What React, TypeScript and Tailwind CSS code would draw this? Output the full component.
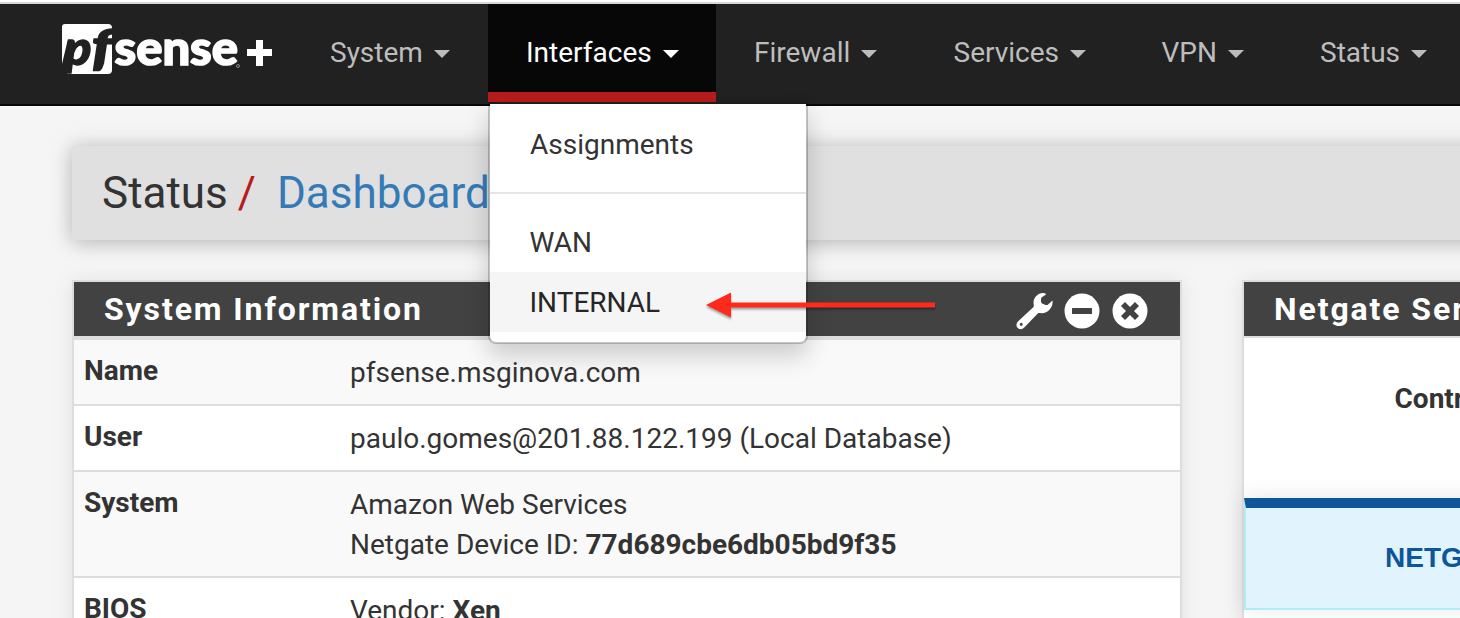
import type { ReactNode } from "react";

function Caret() {
  return <span className="mt-px ml-[11px] h-0 w-0 border-x-8 border-t-8 border-x-transparent border-t-current" />;
}

function NavItem({ label, width, active = false }: { label: string; width: string; active?: boolean }) {
  return (
    <li
      className={`flex h-[98px] shrink-0 items-center border-b-[10px] pl-[38px] ${width} ${
        active ? "border-[#b71c1c] bg-[#070707] text-white" : "border-transparent text-[#bdbdbd]"
      }`}
    >
      <span className="mt-[10px] flex items-center">
        {label}
        <Caret />
      </span>
    </li>
  );
}

function Logo() {
  return (
    <svg width="212" height="52" viewBox="0 0 212 52" className="block shrink-0 overflow-visible" aria-label="pfSense plus">
      <path d="M3 0H46Q50 0 50 4V46Q50 50 46 50H5L12 17H5.500L0 40V3Q0 0 3 0Z" fill="#fff" />
      <text x="2.500" y="41" fill="#212121" stroke="#212121" strokeWidth="1.400" fontFamily="Lato" fontWeight="900" fontStyle="italic" fontSize="48" textLength="27" lengthAdjust="spacingAndGlyphs">p</text>
      <text x="29.500" y="41" fill="#212121" stroke="#212121" strokeWidth="1.400" fontFamily="Lato" fontWeight="900" fontStyle="italic" fontSize="50" textLength="21" lengthAdjust="spacingAndGlyphs">f</text>
      <text x="52.500" y="41" fill="#fff" stroke="#fff" strokeWidth="1.600" fontFamily="Lato" fontWeight="900" fontSize="47.500" textLength="123.500" lengthAdjust="spacingAndGlyphs">sense</text>
      <circle cx="176" cy="42" r="1.500" fill="none" stroke="#888" />
      <path d="M194 16H201V42H194ZM185 25H210V32H185Z" fill="#fff" />
    </svg>
  );
}

function Row({ label, tone, height, children }: { label: string; tone: string; height: string; children: ReactNode }) {
  return (
    <div className={`flex shrink-0 border-b-2 border-[#ddd] ${tone} ${height}`}>
      <div className="w-[276px] shrink-0 pt-[11px] pl-[10px] font-bold">{label}</div>
      <div className="pt-[13px]">{children}</div>
    </div>
  );
}

function PanelIcons() {
  return (
    <div className="flex items-center pt-[3px] text-white">
      <svg width="38" height="38" viewBox="0 0 38 38" fill="currentColor">
        <path
          fillRule="evenodd"
          d="M28.500 1.200C23 0 17.500 5 17.500 10.500C17.500 12.500 18.200 14 17.500 15L2.200 29.200C-0.500 32 .3 35.300 2.300 36.500C4.500 38 6.600 37.300 8.500 35.300L22 21.300C22.700 20.600 24 21 25.500 21.200C32 21.500 37.500 15 36.500 8.500L31.500 13C30.500 13.500 26.500 12 25.500 11C24.500 9.500 25 6.500 25.500 5.500L30 2.500C30 1.800 29.500 1.400 28.500 1.200ZM5.200 30.800A1.500 1.500 0 1 1 5.200 33.800A1.500 1.500 0 1 1 5.200 30.800Z"
        />
      </svg>
      <svg width="36" height="36" viewBox="0 0 36 36" className="ml-[10px]">
        <circle cx="18" cy="18" r="17.500" fill="#fff" />
        <rect x="8" y="15" width="20" height="6" rx="0.500" fill="#424242" />
      </svg>
      <svg width="36" height="36" viewBox="0 0 36 36" className="ml-3">
        <circle cx="18" cy="18" r="17.500" fill="#fff" />
        <path d="M13 9L18 14L23 9L27 13L22 18L27 23L23 27L18 22L13 27L9 23L14 18L9 13Z" fill="#424242" />
      </svg>
    </div>
  );
}

function InterfacesMenu() {
  return (
    <div className="absolute top-[102px] left-[488px] z-10 h-[242px] w-[320px] rounded-b-[8px] border-2 border-t-0 border-black/20 bg-white bg-clip-padding text-[#333] shadow-[0_12px_24px_rgba(0,0,0,0.18)]">
      <div className="h-0.5 bg-[#1c1c1c]" />
      <div className="pt-[21px] pl-10">Assignments</div>
      <div className="mt-[27px] h-0.5 bg-[#e5e5e5]" />
      <div className="mt-[18px] h-[60px] pt-[11px] pl-[39.500px]">WAN</div>
      <div className="h-[60px] bg-[#f5f5f5] pt-[11px] pl-[39.500px] text-[#262626]">INTERNAL</div>
    </div>
  );
}

export default function App() {
  return (
    <div className="relative flex h-[618px] w-[1460px] flex-col overflow-hidden bg-[#f5f5f5] font-['Roboto',sans-serif] text-[28px] leading-[40px] text-[#333]">
      <div className="h-1 shrink-0 border-b-2 border-[#d8d8dc] bg-white" />
      <nav className="flex h-[102px] shrink-0 border-b-2 border-[#080808] bg-[#212121]">
        <div className="w-[292px] shrink-0 pt-5 pl-[62px]"><Logo /></div>
        <ul className="flex">
          <NavItem label="System" width="w-[196px]" />
          <NavItem label="Interfaces" width="w-[228px]" active />
          <NavItem label="Firewall" width="w-[199.500px]" />
          <NavItem label="Services" width="w-[208px]" />
          <NavItem label="VPN" width="w-[158.500px]" />
          <NavItem label="Status" width="w-[190px]" />
        </ul>
      </nav>

      <header className="mt-10 -mr-10 ml-[72px] flex h-[94px] shrink-0 items-center bg-[#e0e0e0] pl-[30px] text-[44px] shadow-[0_2px_20px_rgba(0,0,0,0.28)]">
        <span>Status</span>
        <span className="ml-[10px] text-[#b71c1c]">/</span>
        <span className="ml-[21px] text-[#337ab7]">Dashboard</span>
      </header>

      <main className="mt-10 ml-[72px] flex shrink-0 items-start">
        <section className="flex h-[400px] w-[1110px] shrink-0 flex-col border-2 border-[#ddd] bg-white shadow-[0_2px_20px_rgba(0,0,0,0.09)]">
          <div className="flex h-[58px] shrink-0 justify-between border-b-4 border-[#ddd] bg-[#424242] pr-8 pl-[30px]">
            <h2 className="pt-[7px] text-[32px] font-bold tracking-[1.9px] text-white">System Information</h2>
            <PanelIcons />
          </div>
          <Row label="Name" tone="bg-[#f9f9f9]" height="h-[66px]">pfsense.msginova.com</Row>
          <Row label="User" tone="bg-white" height="h-[66px]">paulo.gomes@201.88.122.199 (Local Database)</Row>
          <Row label="System" tone="bg-[#f9f9f9]" height="h-[106px]">
            Amazon Web Services
            <br />
            Netgate Device ID: <b>77d689cbe6db05bd9f35</b>
          </Row>
          <Row label="BIOS" tone="bg-white" height="h-[106px]">
            Vendor: <b>Xen</b>
          </Row>
        </section>

        <section className="ml-[60px] h-[400px] w-[400px] shrink-0 border-2 border-[#ddd] bg-white shadow-[0_2px_20px_rgba(0,0,0,0.09)]">
          <div className="h-14 border-b-2 border-[#ddd] bg-[#424242] pt-[7px] pl-[30px]">
            <h2 className="text-[32px] font-bold tracking-[1.9px] whitespace-nowrap text-white">Netgate Services</h2>
          </div>
          <div className="h-[160px] pt-[41px] pl-[150.500px] font-bold whitespace-nowrap">Contract type</div>
          <div className="h-28 border-2 border-t-[10px] border-[#b2ebf2] border-t-[#0d5699] bg-[#e1f4fe] pt-[30px] pl-[139px] font-['Liberation_Sans',sans-serif] font-bold whitespace-nowrap text-[#0d5699] shadow-[0_-2px_20px_rgba(0,0,0,0.09)]">
            NETGATE
          </div>
        </section>
      </main>

      <InterfacesMenu />

      <svg width="236" height="36" viewBox="0 0 236 36" className="absolute top-[288px] left-[704px] z-20 drop-shadow-[0_2px_1px_rgba(0,0,0,0.35)]">
        <path d="M2 17L27 4.500V14.500H231V19.500H27V29.500Z" fill="#ff2a1c" />
      </svg>
    </div>
  );
}
